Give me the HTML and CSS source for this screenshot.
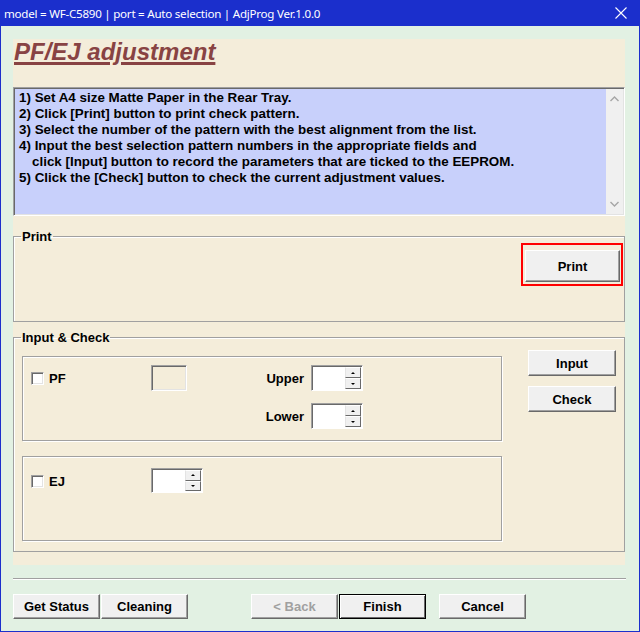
FILE: index.html
```html
<!DOCTYPE html>
<html lang="en">

<head>
    <meta charset="UTF-8">
    <title>AdjProg - PF/EJ adjustment</title>
    <link rel="stylesheet" href="styles.css">
</head>

<body>
    <div class="window">
        <div class="titlebar">
            <span class="caption">model = WF-C5890 | port = Auto selection | AdjProg Ver.1.0.0</span>
            <svg class="close" width="12" height="12" viewBox="0 0 12 12">
                <path d="M0.5 0.5 L11.5 11.5 M11.5 0.5 L0.5 11.5" stroke="#fff" stroke-width="1.1" fill="none" />
            </svg>
        </div>

        <div class="client">
            <div class="page">
                <h1 class="heading">PF/EJ adjustment</h1>

                <div class="memo">
                    <div class="memo-text">
                        <p>1) Set A4 size Matte Paper in the Rear Tray.</p>
                        <p>2) Click [Print] button to print check pattern.</p>
                        <p>3) Select the number of the pattern with the best alignment from the list.</p>
                        <p>4) Input the best selection pattern numbers in the appropriate fields and</p>
                        <p class="indent">click [Input] button to record the parameters that are ticked to the EEPROM.</p>
                        <p>5) Click the [Check] button to check the current adjustment values.</p>
                    </div>
                    <div class="memo-scroll">
                        <svg width="9" height="6" viewBox="0 0 9 6">
                            <path d="M0.5 5 L4.5 1 L8.5 5" stroke="#a6a6a6" stroke-width="1.4" fill="none" />
                        </svg>
                        <svg width="9" height="6" viewBox="0 0 9 6">
                            <path d="M0.5 1 L4.5 5 L8.5 1" stroke="#a6a6a6" stroke-width="1.4" fill="none" />
                        </svg>
                    </div>
                </div>

                <fieldset class="group">
                    <legend>Print</legend>
                    <div class="print-row">
                        <div class="highlight">
                            <button class="btn btn-print">Print</button>
                        </div>
                    </div>
                </fieldset>

                <fieldset class="group check-group">
                    <legend>Input &amp; Check</legend>
                    <div class="check-body">
                        <div class="check-boxes">
                            <div class="sub sub-pf">
                                <label class="opt"><span class="tick"></span>PF</label>
                                <div class="readout"></div>
                                <div class="spins">
                                    <div class="spin-row">
                                        <span>Upper</span>
                                        <div class="spin">
                                            <div class="spin-field"></div>
                                            <div class="spin-btns"><span class="up"></span><span class="down"></span></div>
                                        </div>
                                    </div>
                                    <div class="spin-row">
                                        <span>Lower</span>
                                        <div class="spin">
                                            <div class="spin-field"></div>
                                            <div class="spin-btns"><span class="up"></span><span class="down"></span></div>
                                        </div>
                                    </div>
                                </div>
                            </div>

                            <div class="sub sub-ej">
                                <label class="opt"><span class="tick"></span>EJ</label>
                                <div class="spin">
                                    <div class="spin-field"></div>
                                    <div class="spin-btns"><span class="up"></span><span class="down"></span></div>
                                </div>
                            </div>
                        </div>

                        <div class="check-actions">
                            <button class="btn">Input</button>
                            <button class="btn">Check</button>
                        </div>
                    </div>
                </fieldset>
            </div>

            <div class="rule"></div>

            <div class="footer">
                <button class="btn">Get Status</button>
                <button class="btn">Cleaning</button>
                <button class="btn btn-back" disabled>&lt; Back</button>
                <button class="btn btn-default">Finish</button>
                <button class="btn btn-cancel">Cancel</button>
            </div>
        </div>
    </div>
</body>

</html>
```

FILE: styles.css
```css
* {
    box-sizing: border-box;
}

body {
    margin: 0;
    font-family: "Liberation Sans", Arial, sans-serif;
    overflow: hidden;
}

.window {
    width: 640px;
    height: 632px;
    border: 1px solid #1b2fcc;
    border-top: 0;
    background-color: #e2f1e3;
    display: flex;
    flex-direction: column;
}

.titlebar {
    height: 26px;
    background-color: #1b2fcc;
    display: flex;
    align-items: center;
    justify-content: space-between;
    padding: 0 12px 0 3px;
    color: #fff;
    flex-shrink: 0;
}

.caption {
    font-family: "Noto Sans", "Open Sans", sans-serif;
    font-size: 11.6px;
    letter-spacing: -0.25px;
}

.client {
    padding-top: 13px;
}

.page {
    width: 612px;
    margin-left: 12px;
    background-color: #f4edda;
    padding-bottom: 13px;
}

.heading {
    margin: 0 0 22px 1px;
    font-size: 24px;
    line-height: 26px;
    font-style: italic;
    font-weight: bold;
    color: #884343;
    text-decoration: underline;
    text-decoration-thickness: 3px;
    text-underline-offset: 2px;
}

/* instructions box */
.memo {
    height: 129px;
    display: flex;
    background-color: #c8d0fb;
    border: 1px solid;
    border-color: #a0a0a0 #fff #fff #a0a0a0;
    box-shadow: inset 1px 1px 0 #696969, inset -1px -1px 0 #e3e3e3;
    padding: 1px;
}

.memo-text {
    flex: 1;
    padding: 1px 0 0 4px;
    font-size: 13.4px;
    font-weight: bold;
    line-height: 16px;
    color: #000;
}

.memo-text p {
    margin: 0;
}

.memo-text .indent {
    padding-left: 13px;
}

.memo-scroll {
    width: 17px;
    background-color: #f0f0f0;
    display: flex;
    flex-direction: column;
    align-items: center;
    justify-content: space-between;
    padding: 7px 0 7px;
}

/* group boxes */
.group {
    margin: 13px 0 0;
    padding: 0 1px 0 0;
    border: 1px solid #a0a0a0;
    box-shadow: inset 1px 1px 0 #fff;
    min-width: 0;
}

.group legend {
    margin-left: 7px;
    padding: 0 1px;
    font-size: 13px;
    font-weight: bold;
    line-height: 15px;
    color: #000;
}

.print-row {
    height: 77px;
    display: flex;
    justify-content: flex-end;
    align-items: flex-start;
}

.highlight {
    border: 2px solid #f00;
    padding: 5px 1px 2px 2px;
    margin-top: -1px;
}

.check-group {
    margin-top: 8px;
}

.check-body {
    display: flex;
    gap: 26px;
    padding: 5px 0 10px 8px;
}

.check-boxes {
    display: flex;
    flex-direction: column;
    gap: 15px;
    margin-top: 6px;
}

.sub {
    width: 480px;
    height: 85px;
    border: 1px solid #a0a0a0;
    box-shadow: inset 1px 1px 0 #fff, 1px 1px 0 #fff;
    display: flex;
    align-items: flex-start;
    padding-left: 8px;
}

.sub-pf {
    padding-top: 8px;
}

.sub-ej {
    padding-top: 11px;
}

.opt {
    width: 120px;
    height: 26px;
    display: flex;
    align-items: center;
    gap: 5px;
    font-size: 13px;
    font-weight: bold;
    color: #000;
}

.tick {
    width: 13px;
    height: 13px;
    background-color: #fff;
    border: 1px solid;
    border-color: #a0a0a0 #fff #fff #a0a0a0;
    box-shadow: inset 1px 1px 0 #696969, inset -1px -1px 0 #e3e3e3;
}

.readout {
    width: 36px;
    height: 26px;
    border: 1px solid;
    border-color: #a0a0a0 #fff #fff #a0a0a0;
    box-shadow: inset 1px 1px 0 #696969, inset -1px -1px 0 #e3e3e3;
}

.spins {
    margin-left: 77px;
    width: 99px;
    display: flex;
    flex-direction: column;
    gap: 12px;
}

.spin-row {
    display: flex;
    justify-content: flex-end;
    align-items: center;
    gap: 7px;
    font-size: 13px;
    font-weight: bold;
    color: #000;
}

.spin {
    width: 52px;
    height: 26px;
    display: flex;
    background-color: #fff;
    border: 1px solid;
    border-color: #a0a0a0 #fff #fff #a0a0a0;
    box-shadow: inset 1px 1px 0 #696969;
    padding: 1px;
}

.sub-ej .spin {
    height: 25px;
}

.spin-field {
    flex: 1;
}

.spin-btns {
    width: 16px;
    display: flex;
    flex-direction: column;
}

.spin-btns span {
    flex: 1;
    background-color: #f0f0f0;
    border: 1px solid;
    border-color: #fff #696969 #696969 #e3e3e3;
    display: flex;
    align-items: center;
    justify-content: center;
}

.spin-btns .up::after,
.spin-btns .down::after {
    content: "";
    border-left: 2px solid transparent;
    border-right: 2px solid transparent;
}

.spin-btns .up::after {
    border-bottom: 2px solid #000;
}

.spin-btns .down::after {
    border-top: 2px solid #000;
}

.check-actions {
    display: flex;
    flex-direction: column;
    gap: 10px;
}

/* push buttons */
.btn {
    width: 87px;
    height: 25px;
    padding: 0;
    font-family: "Liberation Sans", Arial, sans-serif;
    font-size: 13px;
    font-weight: bold;
    color: #000;
    background-color: #f0f0f0;
    border: 1px solid;
    border-color: #fff #696969 #696969 #fff;
    box-shadow: inset -1px -1px 0 #a0a0a0;
    border-radius: 0;
}

.check-actions .btn {
    width: 88px;
    height: 26px;
}

.btn-print {
    width: 95px;
    height: 32px;
}

.rule {
    margin: 13px 13px 0 12px;
    border-top: 1px solid #a0a0a0;
    border-bottom: 1px solid #fff;
}

.footer {
    display: flex;
    gap: 1px;
    padding: 14px 0 0 12px;
}

.btn-back {
    margin-left: 62px;
    color: #a0a0a0;
}

.btn-default {
    border-color: #000;
    box-shadow: inset 1px 1px 0 #fff, inset -1px -1px 0 #696969;
}

.btn-cancel {
    margin-left: 12px;
}
```
